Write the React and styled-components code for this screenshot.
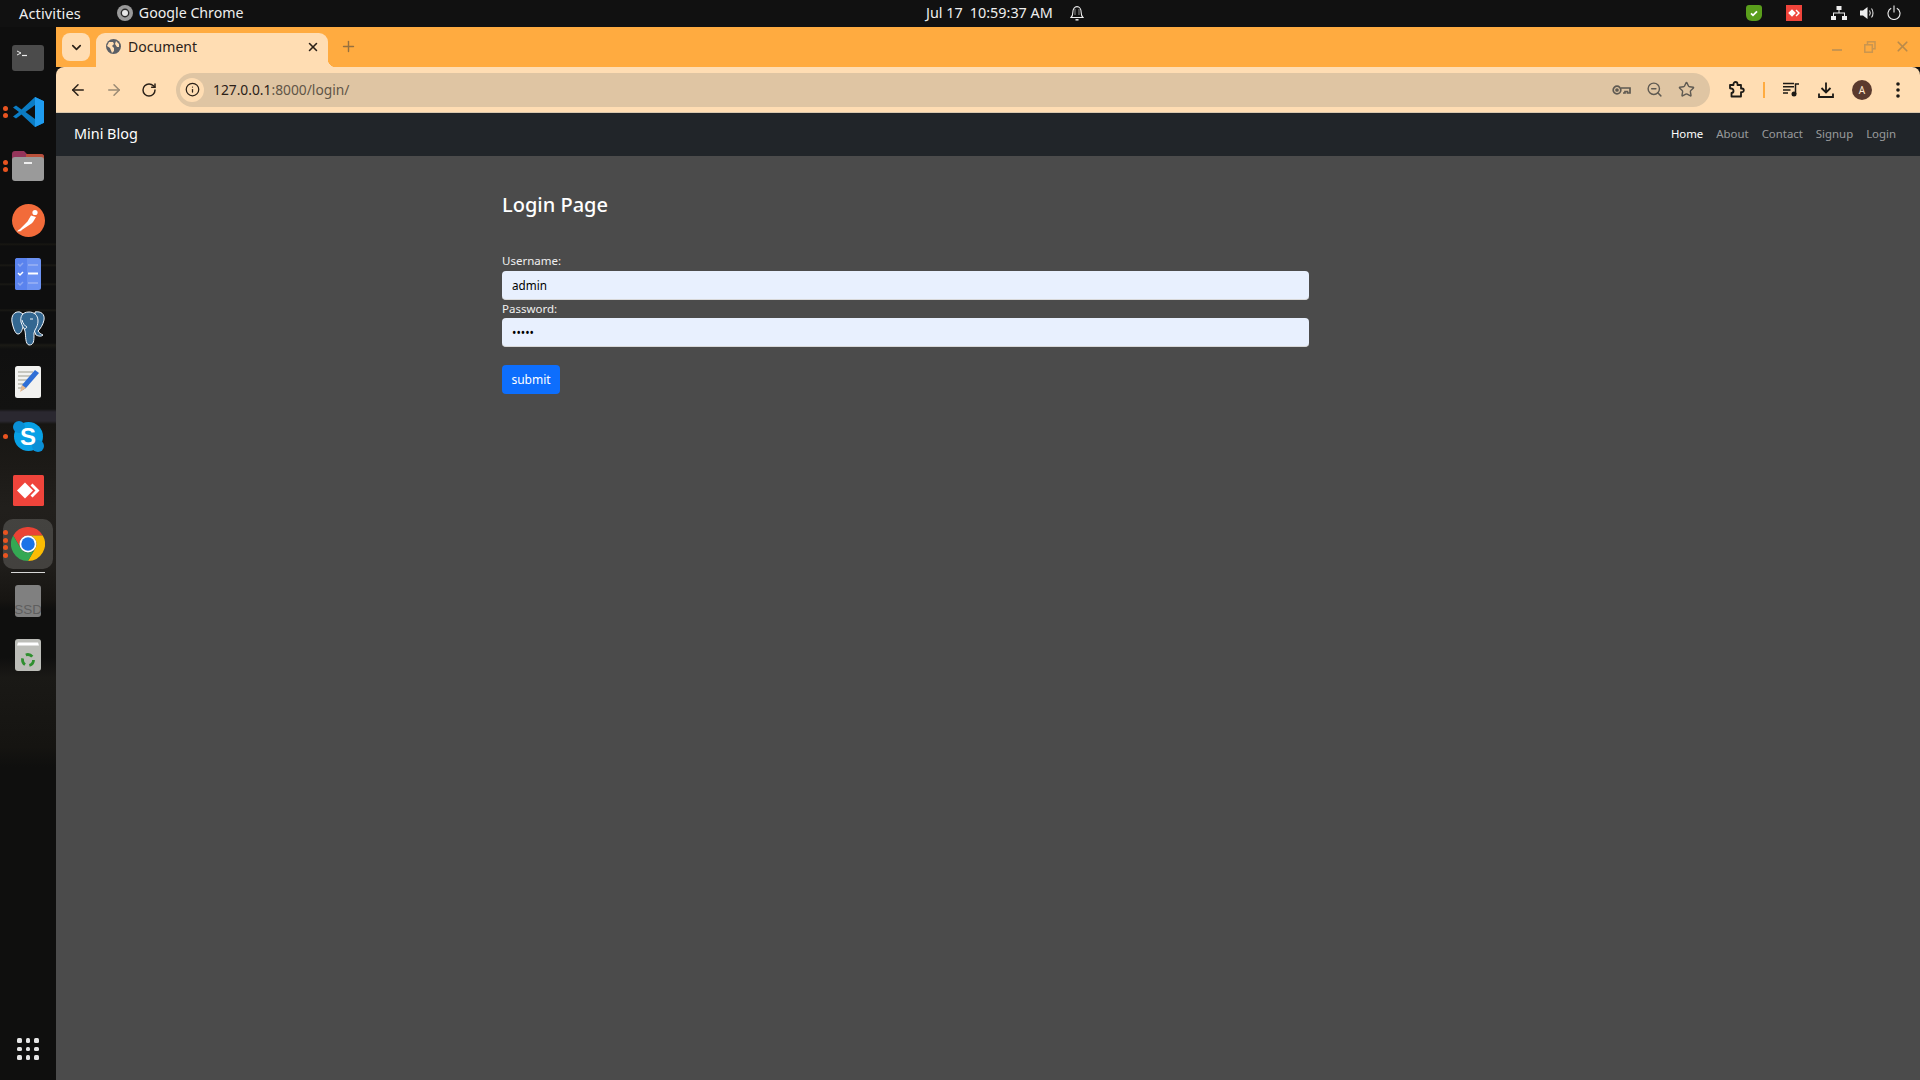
import React from "react";
import styled, { createGlobalStyle } from "styled-components";
import {
  ArrowLeft,
  ArrowRight,
  RotateCw,
  Info,
  ZoomOut,
  Star,
  ChevronDown,
  X,
  Plus,
} from "lucide-react";

const UI_FONT = `"Noto Sans", "Open Sans", sans-serif`;

const GlobalStyle = createGlobalStyle`
  html, body {
    margin: 0;
    padding: 0;
    width: 1920px;
    height: 1080px;
    overflow: hidden;
    background: #111;
    font-family: ${UI_FONT};
  }
  * { box-sizing: border-box; }
`;

const App = () => {
  return (
    <Screen>
      <GlobalStyle />
      <TopBar>
        <TopLeft>
          <Activities>Activities</Activities>
          <AppName>
            <ChromeMono />
            Google Chrome
          </AppName>
        </TopLeft>
        <Clock>
          <span>Jul 17</span>
          <span>10:59:37 AM</span>
          <BellIcon />
        </Clock>
        <Tray>
          <ShieldTray />
          <AnyTray />
          <NetworkIcon />
          <VolumeIcon />
          <PowerIcon />
        </Tray>
      </TopBar>
      <Desktop>
        <Dock>
          <DockSlot><TerminalIcon /></DockSlot>
          <DockSlot dots={2}><VsCodeIcon /></DockSlot>
          <DockSlot dots={2}><FilesIcon /></DockSlot>
          <DockSlot><PostmanIcon /></DockSlot>
          <DockSlot><TasksIcon /></DockSlot>
          <DockSlot><PostgresIcon /></DockSlot>
          <DockSlot><NotesIcon /></DockSlot>
          <DockSlot dots={1}><SkypeBadge>S</SkypeBadge></DockSlot>
          <DockSlot><AnyDeskIcon /></DockSlot>
          <DockSlot dots={4} active><ChromeIcon /></DockSlot>
          <DockRule />
          <DockSlot><SsdIcon><span>SSD</span></SsdIcon></DockSlot>
          <DockSlot><TrashIcon /></DockSlot>
          <AppGrid>
            {Array.from({ length: 9 }).map((_, i) => (
              <i key={i} />
            ))}
          </AppGrid>
        </Dock>
        <Browser>
          <TabStrip>
            <TabSearch>
              <ChevronDown size={15} strokeWidth={2.6} color="#2b2118" />
            </TabSearch>
            <Tab>
              <GlobeIcon />
              <TabTitle>Document</TabTitle>
              <X size={14} strokeWidth={2.6} color="#2b2118" />
            </Tab>
            <NewTab>
              <Plus size={17} strokeWidth={2} color="#96703f" />
            </NewTab>
            <WindowControls>
              <WinMin />
              <WinRestore />
              <X size={17} strokeWidth={2.4} color="#b98a4b" />
            </WindowControls>
          </TabStrip>
          <Toolbar>
            <NavIcons>
              <ArrowLeft size={18} strokeWidth={2} color="#2b2118" />
              <ArrowRight size={18} strokeWidth={2} color="#9a8a74" />
              <RotateCw size={16} strokeWidth={2.2} color="#2b2118" />
            </NavIcons>
            <Omnibox>
              <SiteInfo>
                <Info size={15} strokeWidth={2} color="#2b2118" />
              </SiteInfo>
              <Url>
                127.0.0.1<em>:8000/login/</em>
              </Url>
              <OmniActions>
                <KeyIcon />
                <ZoomOut size={17} strokeWidth={2} color="#5f5a52" />
                <Star size={17} strokeWidth={2} color="#5f5a52" />
              </OmniActions>
            </Omnibox>
            <ToolActions>
              <PuzzleIcon />
              <ToolRule />
              <QueueIcon />
              <DownloadIcon />
              <Avatar>A</Avatar>
              <KebabIcon />
            </ToolActions>
          </Toolbar>
          <Navbar>
            <Brand>Mini Blog</Brand>
            <NavLinks>
              <NavLink $active>Home</NavLink>
              <NavLink>About</NavLink>
              <NavLink>Contact</NavLink>
              <NavLink>Signup</NavLink>
              <NavLink>Login</NavLink>
            </NavLinks>
          </Navbar>
          <Page>
            <Content>
              <Heading>Login Page</Heading>
              <LoginForm onSubmit={(e) => e.preventDefault()}>
                <Label htmlFor="username">Username:</Label>
                <Input id="username" type="text" defaultValue="admin" />
                <Label htmlFor="password">Password:</Label>
                <Input id="password" type="password" defaultValue="admin" />
                <SubmitButton type="submit">submit</SubmitButton>
              </LoginForm>
            </Content>
          </Page>
        </Browser>
      </Desktop>
    </Screen>
  );
};

export default App;

/* top bar icons */

const ChromeMono = () => (
  <svg width="16" height="16" viewBox="0 0 16 16">
    <circle cx="8" cy="8" r="8" fill="#9a9a9a" />
    <circle cx="8" cy="8" r="4.4" fill="#2a2a2a" />
    <circle cx="8" cy="8" r="3" fill="#e8e8e8" />
  </svg>
);

const BellIcon = () => (
  <svg width="14" height="16" viewBox="0 0 14 16" fill="none" stroke="#eee" strokeWidth="1.1">
    <path d="M1 12.500c1.400-1.200 1.800-2.600 1.800-5C2.800 4 4.600 1.600 7 1.600S11.200 4 11.200 7.500c0 2.400.4 3.800 1.800 5z" />
    <path d="M5 4v6M9 4v6" opacity="0.5" />
    <path d="M5.500 14.800h3" strokeWidth="1.500" />
  </svg>
);

const ShieldTray = () => (
  <svg width="16" height="16" viewBox="0 0 16 16">
    <path d="M3 0h10c2 0 3 1.200 3 3v7c0 3-3 6-6 6H6C2 16 0 13 0 10V3c0-2 1.200-3 3-3z" fill="#5a9e1c" />
    <path d="M5 8.300l2 2 4-4" stroke="#fff" strokeWidth="1.800" fill="none" />
  </svg>
);

const AnyTray = () => (
  <svg width="16" height="16" viewBox="0 0 16 16">
    <rect width="16" height="16" fill="#ef443b" />
    <path d="M6 4.200L9.800 8 6 11.800 2.200 8z" fill="#fff" />
    <path d="M10.500 4.500L14 8l-3.500 3.500-1-1L12 8 9.500 5.500z" fill="#fff" />
  </svg>
);

const NetworkIcon = () => (
  <svg width="16" height="14" viewBox="0 0 16 14" fill="#eee">
    <rect x="5.500" y="0" width="5" height="4" />
    <rect x="0" y="10" width="5" height="4" />
    <rect x="11" y="10" width="5" height="4" />
    <path d="M7.500 4h1v2.500h5.500V10h-1V7.500H3V10H2V6.500h5.500z" />
  </svg>
);

const VolumeIcon = () => (
  <svg width="15" height="14" viewBox="0 0 15 14">
    <path d="M0 4.500h3L7.500 1v12L3 9.500H0z" fill="#eee" />
    <path d="M9.500 4.500c1 1.500 1 3.500 0 5M11.500 2.500c2 2.500 2 6.500 0 9" stroke="#ddd" fill="none" strokeWidth="1.100" />
  </svg>
);

const PowerIcon = () => (
  <svg width="14" height="15" viewBox="0 0 14 15" fill="none" stroke="#eee" strokeWidth="1.100">
    <path d="M4.200 3.200a6 6 0 1 0 5.600 0" />
    <path d="M7 0.500v7" />
  </svg>
);

/* dock icons */

const TerminalIcon = () => (
  <svg width="32" height="26" viewBox="0 0 32 26">
    <rect width="32" height="26" rx="3" fill="#4b4b4b" />
    <path d="M5 6l4 2-4 2" stroke="#eee" fill="none" strokeWidth="1" />
    <path d="M10 10.500h5" stroke="#eee" strokeWidth="1.200" />
  </svg>
);

const VsCodeIcon = () => (
  <svg width="31" height="30" viewBox="0 0 31 30">
    <path d="M22 0l9 4.200v21.600L22 30 8.500 17.500 3 21.500 0 19.500 6 15 0 10.500 3 8.500l5.500 4z" fill="#0b7cc4" />
    <path d="M22 0l9 4.200v21.600L22 30z" fill="#1f9cf0" />
    <path d="M22 8L12.500 15 22 22z" fill="#0f0f0f" />
  </svg>
);

const FilesIcon = () => (
  <svg width="32" height="30" viewBox="0 0 32 30">
    <path d="M0 3a3 3 0 0 1 3-3h9l3 3h14a3 3 0 0 1 3 3v6H0z" fill="#94345a" />
    <path d="M14 3h15a3 3 0 0 1 3 3v3H14z" fill="#b9503a" />
    <rect y="6" width="32" height="24" rx="3" fill="#9a9a9a" />
    <rect x="12" y="11" width="8" height="2" fill="#eee" />
  </svg>
);

const PostmanIcon = () => (
  <svg width="33" height="33" viewBox="0 0 33 33">
    <circle cx="16.500" cy="16.500" r="16.500" fill="#f26b3a" />
    <circle cx="23" cy="8.500" r="2.600" fill="#fff" />
    <path d="M19 11.500l5 1.500-3 5-1.500 1.500-10.500 7-2-.5 8.500-8.500z" fill="#fff" />
    <path d="M7 25.500l3 1.500-5 .5z" fill="#fff" />
  </svg>
);

const TasksIcon = () => (
  <svg width="26" height="32" viewBox="0 0 26 32">
    <rect width="26" height="32" rx="2.500" fill="#6c92f2" />
    <path d="M2.500 0H12v32H2.500A2.500 2.500 0 0 1 0 29.500v-27A2.500 2.500 0 0 1 2.500 0z" fill="#5a83ee" />
    <path d="M3 6l2 2 3-3M3 25l2 2 3-3" stroke="#8aa6f0" strokeWidth="1.500" fill="none" />
    <path d="M3 15l2 2 3-3" stroke="#fff" strokeWidth="1.500" fill="none" />
    <path d="M13 7h10M13 25h10" stroke="#9ab3f3" strokeWidth="1.500" />
    <path d="M13 15.500h10" stroke="#fff" strokeWidth="2" />
  </svg>
);

const PostgresIcon = () => (
  <svg width="34" height="35" viewBox="0 0 34 35" stroke="#f2f6fa" strokeWidth="1" strokeLinejoin="round">
    <path d="M9 1C3 0 0 5 1 11c1 5 3 12 6 12 3 0 4-4 5-7V3z" fill="#336791" />
    <path d="M24 1c6-1 10 2 9 8-1 5-4 9-6 11 1 2 3 3 5 4-2 2-5 1-7 0l-2-5z" fill="#336791" />
    <path d="M18 1c-7 0-9 5-8 10 1 4 3 6 4 9 1 5 0 13 4 14 5 0 5-4 5-12l1-3c2-3 3-6 3-9 0-6-4-9-9-9z" fill="#336791" />
    <path d="M11 9c1 4 3 6 5 7-1 1-1 2-3 2M19 8h3" fill="none" />
  </svg>
);

const NotesIcon = () => (
  <svg width="26" height="32" viewBox="0 0 26 32">
    <rect width="26" height="32" rx="2.500" fill="#f2f2f0" />
    <path d="M3 6h15M3 10h13M3 14h10M3 18h8M3 22h6" stroke="#b9b9ae" strokeWidth="1.500" />
    <path d="M20 4l4 3-13 15-5 3 1-6z" fill="#2f6fd6" />
    <path d="M7 19l4 3-6 4z" fill="#e8b98a" />
  </svg>
);

const AnyDeskIcon = () => (
  <svg width="31" height="31" viewBox="0 0 31 31">
    <rect width="31" height="31" rx="1.500" fill="#ef443b" />
    <path d="M12 7.500L20 15.500 12 23.500 4 15.500z" fill="#fff" />
    <path d="M19.500 8.500L26.500 15.500 19.500 22.500 17.500 20.500 22.500 15.500 17.500 10.500z" fill="#fff" />
  </svg>
);

const ChromeIcon = () => (
  <svg width="34" height="34" viewBox="0 0 48 48">
    <path d="M24 12h20.800A24 24 0 0 0 3.200 12l10.400 18A12 12 0 0 1 24 12z" fill="#ea4335" />
    <path d="M44.800 12H24a12 12 0 0 1 10.400 18L24 48A24 24 0 0 0 44.800 12z" fill="#fbbc04" />
    <path d="M3.200 12A24 24 0 0 0 24 48l10.400-18a12 12 0 0 1-20.800 0z" fill="#34a853" />
    <circle cx="24" cy="24" r="12" fill="#fff" />
    <circle cx="24" cy="24" r="9.500" fill="#1a73e8" />
  </svg>
);

const TrashIcon = () => (
  <svg width="26" height="32" viewBox="0 0 26 32">
    <rect width="26" height="32" rx="3" fill="#bcbdb8" />
    <path d="M3 3.500h20l1 3H2z" fill="#fff" />
    <circle cx="13" cy="21" r="5.500" fill="none" stroke="#2f8f2f" strokeWidth="2.800" strokeDasharray="7 4.500" />
  </svg>
);

/* browser icons */

const GlobeIcon = () => (
  <svg width="15" height="15" viewBox="0 0 15 15">
    <circle cx="7.500" cy="7.500" r="7.500" fill="#5b5f66" />
    <path d="M3 3h4l1 2-2 2 2 2v3L6 14 4 9 1 7zM10 2l3 3v3h-2L9 5z" fill="#ffddb3" />
  </svg>
);

const WinMin = () => (
  <svg width="12" height="12" viewBox="0 0 12 12">
    <path d="M1 9h10" stroke="#c9954f" strokeWidth="2" />
  </svg>
);

const WinRestore = () => (
  <svg width="12" height="12" viewBox="0 0 12 12" fill="none" stroke="#c9954f" strokeWidth="1.500">
    <rect x="3.500" y="0.800" width="7.500" height="7" />
    <rect x="0.800" y="3.800" width="7.500" height="7.400" fill="#ffab40" />
  </svg>
);

const KeyIcon = () => (
  <svg width="19" height="12" viewBox="0 0 19 12" fill="none" stroke="#5f5a52" strokeWidth="1.700">
    <circle cx="5" cy="6" r="3.800" />
    <circle cx="5" cy="6" r="1" fill="#5f5a52" />
    <path d="M9 4h9v5h-2.500V7.500H13V9h-2" />
  </svg>
);

const PuzzleIcon = () => (
  <svg width="17" height="17" viewBox="0 0 17 17" fill="none" stroke="#1d1a16" strokeWidth="1.800">
    <path d="M2 4h3.500V3a2 2 0 0 1 4 0v1H13v3.500h1a1.800 1.800 0 0 1 0 3.600h-1V15.500H3.500v-3.500a2.200 2.200 0 0 0-.5-4.500L2 7.300z" strokeLinejoin="round" />
  </svg>
);

const QueueIcon = () => (
  <svg width="16" height="15" viewBox="0 0 16 15">
    <path d="M0 1.500h11M0 4.800h11M0 8h7.500M0 11h5" stroke="#1d1a16" strokeWidth="1.400" />
    <circle cx="11" cy="12" r="2.500" fill="#1d1a16" />
    <path d="M12.500 12V2h3.500" stroke="#1d1a16" strokeWidth="1.500" fill="none" />
  </svg>
);

const DownloadIcon = () => (
  <svg width="16" height="16" viewBox="0 0 16 16" fill="none" stroke="#1d1a16" strokeWidth="1.800">
    <path d="M8 0.500v9.500M3.500 6l4.500 4.500L12.500 6" />
    <path d="M1 11.500v3.500h14v-3.500" />
  </svg>
);

const KebabIcon = () => (
  <svg width="4" height="16" viewBox="0 0 4 16" fill="#1d1a16">
    <circle cx="2" cy="2" r="1.800" />
    <circle cx="2" cy="8" r="1.800" />
    <circle cx="2" cy="14" r="1.800" />
  </svg>
);

/* layout */

const Screen = styled.div`
  width: 1920px;
  height: 1080px;
  display: flex;
  flex-direction: column;
`;

const TopBar = styled.header`
  height: 27px;
  flex: none;
  position: relative;
  display: flex;
  align-items: center;
  justify-content: space-between;
  padding: 0 19px 2px 19px;
  background: #111;
  color: #eee;
  font-size: 14.6px;
`;

const TopLeft = styled.div`
  display: flex;
  align-items: center;
  gap: 36px;
`;

const Activities = styled.span`
  letter-spacing: 0.1px;
`;

const AppName = styled.span`
  display: flex;
  align-items: center;
  gap: 6px;
  font-size: 14.2px;
`;

const Clock = styled.div`
  position: absolute;
  left: 926px;
  top: 0;
  height: 25px;
  display: flex;
  align-items: center;
  gap: 7px;
  font-size: 14.4px;

  svg {
    margin-left: 10px;
  }
`;

const Tray = styled.div`
  display: flex;
  align-items: center;
  gap: 24px;

  svg:nth-child(3) {
    margin-left: 5px;
  }
  svg:nth-child(4) {
    margin-left: -11px;
  }
  svg:nth-child(5) {
    margin-left: -12px;
  }
`;

const Desktop = styled.div`
  flex: 1;
  display: flex;
  min-height: 0;
`;

const Dock = styled.nav`
  width: 56px;
  flex: none;
  display: flex;
  flex-direction: column;
  padding: 4px 0;
  background: linear-gradient(
    180deg,
    #0e0e0e 0,
    #0e0e0e 216px,
    #191813 217px,
    #0e0e0e 219px,
    #0e0e0e 237px,
    #1b1a15 238px,
    #0e0e0e 240px,
    #0e0e0e 256px,
    #1b1a15 257px,
    #0e0e0e 259px,
    #0e0e0e 282px,
    #1b1a15 283px,
    #0e0e0e 285px,
    #0e0e0e 316px,
    #1b1a15 318px,
    #101010 322px,
    #121211 382px,
    #2a2830 385px,
    #2a2830 394px,
    #171613 397px,
    #1c1a17 440px,
    #211f1c 480px,
    #1f1d1a 540px,
    #171512 572px,
    #0f0f0e 582px,
    #0f0f0e 630px,
    #1a1916 650px,
    #151411 720px,
    #0f0f0e 740px,
    #0f0f0e 100%
  );
`;

const DockCell = styled.div`
  height: 54px;
  flex: none;
  position: relative;
  display: flex;
  align-items: center;
  justify-content: center;

  ${({ $active }) =>
    $active &&
    `
    &::before {
      content: "";
      position: absolute;
      left: 3px;
      top: 2px;
      width: 50px;
      height: 50px;
      border-radius: 10px;
      background: rgba(255, 255, 255, 0.16);
    }
    svg { position: relative; }
  `}
`;

const Dots = styled.div`
  position: absolute;
  left: 3px;
  top: 0;
  bottom: 0;
  display: flex;
  flex-direction: column;
  justify-content: center;
  gap: 2.5px;

  i {
    display: block;
    width: 5px;
    height: 5px;
    border-radius: 50%;
    background: #e95420;
  }
`;

const DockSlot = ({ dots = 0, active, children }) => (
  <DockCell $active={active}>
    {children}
    {dots > 0 && (
      <Dots>
        {Array.from({ length: dots }).map((_, i) => (
          <i key={i} />
        ))}
      </Dots>
    )}
  </DockCell>
);

const DockRule = styled.div`
  height: 1px;
  margin: 1px 11px;
  flex: none;
  background: #d8d8d8;
`;

const SkypeBadge = styled.div`
  width: 29px;
  height: 29px;
  position: relative;
  isolation: isolate;
  border-radius: 50%;
  background: #08a1e6;
  color: #fff;
  font-family: "Liberation Sans", sans-serif;
  font-size: 24px;
  font-weight: 700;
  line-height: 29px;
  text-align: center;

  &::before,
  &::after {
    content: "";
    position: absolute;
    width: 12px;
    height: 12px;
    border-radius: 50%;
    background: #0a8fd6;
    z-index: -1;
  }
  &::before {
    left: -1px;
    top: -1px;
  }
  &::after {
    right: -1px;
    bottom: -1px;
  }
`;

const SsdIcon = styled.div`
  width: 26px;
  height: 32px;
  border-radius: 3px;
  background: #808080;
  color: #5e5e5e;
  font-family: "Liberation Sans", sans-serif;
  font-size: 13.5px;
  display: flex;
  align-items: flex-end;
  justify-content: center;
  overflow: hidden;

  span {
    line-height: 14px;
    white-space: nowrap;
  }
`;

const AppGrid = styled.div`
  margin: auto 0 0;
  height: 54px;
  flex: none;
  display: grid;
  grid-template-columns: repeat(3, 4.5px);
  grid-auto-rows: 4.5px;
  gap: 3.8px;
  align-content: center;
  justify-content: center;

  i {
    display: block;
    border-radius: 1.5px;
    background: #e6e6e6;
  }
`;

const Browser = styled.main`
  flex: 1;
  min-width: 0;
  display: flex;
  flex-direction: column;
`;

const TabStrip = styled.div`
  height: 40px;
  flex: none;
  display: flex;
  align-items: flex-start;
  background: #ffab40;
  padding: 6px 0 0 6px;
`;

const TabSearch = styled.div`
  width: 28px;
  height: 28px;
  border-radius: 8px;
  background: #ffddb3;
  display: flex;
  align-items: center;
  justify-content: center;
`;

const Tab = styled.div`
  width: 232px;
  height: 34px;
  margin-left: 6px;
  padding: 0 8px 7px 10px;
  border-radius: 9px 9px 0 0;
  background: #ffddb3;
  display: flex;
  align-items: center;
  color: #2b2118;
  font-size: 14px;
  position: relative;

  &::after {
    content: "";
    position: absolute;
    right: -8px;
    bottom: 0;
    width: 8px;
    height: 8px;
    background: radial-gradient(circle at 100% 0, transparent 8px, #ffddb3 8.5px);
  }
`;

const TabTitle = styled.span`
  flex: 1;
  margin-left: 7px;
  letter-spacing: 0.05px;
`;

const NewTab = styled.div`
  width: 36px;
  height: 28px;
  padding-bottom: 1px;
  display: flex;
  align-items: center;
  justify-content: center;
  margin-left: 2px;
`;

const WindowControls = styled.div`
  margin-left: auto;
  height: 27px;
  display: flex;
  align-items: center;
  gap: 21px;
  padding-right: 9px;

  svg:last-child {
    margin-left: -3px;
  }
`;

const Toolbar = styled.div`
  height: 46px;
  flex: none;
  display: flex;
  align-items: center;
  background: #ffddb3;
  border-radius: 8px 8px 0 0;
  border-bottom: 1px solid #d9c7ac;
`;

const NavIcons = styled.div`
  display: flex;
  align-items: center;
  gap: 18px;
  padding-left: 13px;
  width: 120px;
  flex: none;
`;

const Omnibox = styled.div`
  width: 1534px;
  height: 34px;
  flex: none;
  border-radius: 17px;
  background: #dfc5a3;
  display: flex;
  align-items: center;
  padding-left: 4px;
`;

const SiteInfo = styled.div`
  width: 24px;
  height: 24px;
  border-radius: 50%;
  background: #ffddb3;
  display: flex;
  align-items: center;
  justify-content: center;
`;

const Url = styled.div`
  margin-left: 9px;
  color: #2b2118;
  font-size: 13.8px;

  em {
    font-style: normal;
    color: #5f5647;
  }
`;

const OmniActions = styled.div`
  margin-left: auto;
  padding-right: 15.5px;
  display: flex;
  align-items: center;
  gap: 15px;
`;

const ToolActions = styled.div`
  flex: 1;
  display: flex;
  align-items: center;
  padding-left: 18px;
  gap: 19px;

  svg:last-child {
    margin-left: 5px;
  }
`;

const ToolRule = styled.div`
  width: 2px;
  height: 16px;
  margin: 0 -1px;
  background: #ffab40;
`;

const Avatar = styled.div`
  width: 20px;
  height: 20px;
  margin-left: -1px;
  border-radius: 50%;
  background: #5b3a2e;
  color: #ffe9d0;
  font-size: 10px;
  display: flex;
  align-items: center;
  justify-content: center;
`;

const Navbar = styled.div`
  height: 43px;
  flex: none;
  display: flex;
  align-items: center;
  justify-content: space-between;
  padding: 0 24px 2px 18px;
  background: #212529;
`;

const Brand = styled.a`
  color: #fff;
  font-size: 14.4px;
`;

const NavLinks = styled.div`
  display: flex;
  gap: 13px;
`;

const NavLink = styled.a`
  color: ${({ $active }) => ($active ? "#fff" : "rgba(255, 255, 255, 0.55)")};
  font-size: 11.4px;
`;

const Page = styled.div`
  flex: 1;
  background: #4b4b4b;
  padding: 0 0 0 446px;
  color: #fff;
`;

const Content = styled.div`
  width: 807px;
`;

const Heading = styled.h3`
  margin: 0;
  padding-top: 36px;
  font-size: 20px;
  font-weight: 500;
  line-height: 26px;
`;

const LoginForm = styled.form`
  margin-top: 34px;
  display: flex;
  flex-direction: column;
`;

const Label = styled.label`
  font-size: 11.5px;
  line-height: 18px;
  color: #f0f0f0;

  &:first-child {
    margin-bottom: 1px;
  }
`;

const Input = styled.input`
  height: 29px;
  padding: 0 10px;
  border: 0;
  border-bottom: 1px solid #d8d8d8;
  border-radius: 4px;
  background: #e8f0fe;
  color: #000;
  font-family: ${UI_FONT};
  font-size: 11.7px;
  outline: none;
`;

const SubmitButton = styled.button`
  align-self: flex-start;
  margin-top: 18px;
  width: 58px;
  height: 29px;
  border: 0;
  border-radius: 4px;
  background: #0d6efd;
  color: #fff;
  font-family: ${UI_FONT};
  font-size: 12px;
  padding: 0;
`;
